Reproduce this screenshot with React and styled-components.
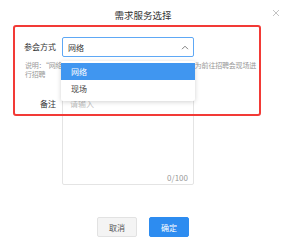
import React from "react";
import styled, { createGlobalStyle } from "styled-components";

const Global = createGlobalStyle`
  html, body { margin: 0; padding: 0; background: #fff; }
  body { font-family: "Noto Sans CJK SC", "Noto Sans", sans-serif; }
  * { box-sizing: border-box; }
`;

const Dialog = styled.div`
  position: relative;
  width: 286px;
  height: 248px;
  background: #fff;
  display: flex;
  flex-direction: column;
`;

const Header = styled.div`
  height: 30px;
  display: flex;
  align-items: center;
  justify-content: center;
  font-size: 9.5px;
  color: #333;
`;

const Close = styled.button`
  position: absolute;
  top: 8px;
  right: 6px;
  width: 9px;
  height: 9px;
  padding: 0;
  border: 0;
  background: none;
  display: flex;
  align-items: center;
  justify-content: center;
`;

const Form = styled.div`
  padding-top: 7px;
  display: flex;
  flex-direction: column;
`;

const Field = styled.div`
  display: flex;
  align-items: ${(p) => (p.$top ? "flex-start" : "center")};
  margin-top: ${(p) => p.$gap || 0}px;
`;

const Label = styled.div`
  width: 62px;
  padding-right: 6px;
  text-align: right;
  font-size: 8px;
  line-height: 10px;
  color: #333;
  padding-top: ${(p) => p.$pt || 0}px;
`;

const SelectWrap = styled.div`
  position: relative;
  width: 132px;
`;

const SelectBox = styled.div`
  height: 20px;
  border: 1px solid #5ea8f5;
  border-radius: 2px;
  display: flex;
  align-items: center;
  justify-content: space-between;
  padding: 0 4px 0 5px;
  font-size: 8px;
  color: #333;
`;

const Menu = styled.div`
  position: absolute;
  top: 24px;
  left: -1px;
  width: 134px;
  padding: 2px 0 4px;
  background: #fff;
  border-radius: 2px;
  box-shadow: 0 1px 5px rgba(0, 0, 0, 0.18);
  z-index: 5;
`;

const Option = styled.div`
  height: 17px;
  line-height: 17px;
  padding-left: 10px;
  font-size: 8px;
  color: ${(p) => (p.$active ? "#fff" : "#444")};
  background: ${(p) => (p.$active ? "#4096f0" : "transparent")};
`;

const Hint = styled.div`
  margin-top: 4px;
  padding-left: 25px;
  width: 270px;
  font-size: 7px;
  line-height: 9px;
  letter-spacing: -0.2px;
  color: #999;
`;

const TextArea = styled.div`
  position: relative;
  width: 132px;
  height: 92px;
  border: 1px solid #e4e4e4;
  border-radius: 2px;
  padding: 5px 7px;
  font-size: 8px;
  line-height: 10px;
  color: #c0c0c0;
`;

const Counter = styled.span`
  position: absolute;
  right: 5px;
  bottom: 1px;
  font-size: 8px;
  color: #999;
`;

const Footer = styled.div`
  margin-top: 32px;
  display: flex;
  justify-content: center;
  gap: 12px;
`;

const Button = styled.button`
  width: 40px;
  height: 20px;
  padding: 0;
  border-radius: 2px;
  font-family: inherit;
  font-size: 8px;
  border: 1px solid ${(p) => (p.$primary ? "#2d8cf0" : "#e2e2e2")};
  background: ${(p) => (p.$primary ? "#2d8cf0" : "#f4f4f4")};
  color: ${(p) => (p.$primary ? "#fff" : "#555")};
`;

const Highlight = styled.div`
  position: absolute;
  left: 13px;
  top: 25px;
  width: 248px;
  height: 91px;
  border: 2px solid #f23a36;
  border-radius: 3px;
  pointer-events: none;
  z-index: 6;
`;

export default function App() {
  return (
    <>
      <Global />
      <Dialog>
        <Header>需求服务选择</Header>
        <Close aria-label="关闭">
          <svg width="8" height="8" viewBox="0 0 8 8">
            <path d="M1 1L7 7M7 1L1 7" stroke="#bdbdbd" strokeWidth="0.9" fill="none" />
          </svg>
        </Close>
        <Form>
          <Field>
            <Label>参会方式</Label>
            <SelectWrap>
              <SelectBox>
                <span>网络</span>
                <svg width="8" height="5" viewBox="0 0 8 5">
                  <path d="M1 4.2L4 1.2L7 4.2" stroke="#808080" strokeWidth="1" fill="none" />
                </svg>
              </SelectBox>
              <Menu>
                <Option $active>网络</Option>
                <Option>现场</Option>
              </Menu>
            </SelectWrap>
          </Field>
          <Hint>
            说明：“网络”参会即为线上视频面试招聘，“现场”参会为前往招聘会现场进
            <br />
            行招聘
          </Hint>
          <Field $top $gap={14}>
            <Label $pt={6}>备注</Label>
            <TextArea>
              请输入
              <Counter>0/100</Counter>
            </TextArea>
          </Field>
        </Form>
        <Footer>
          <Button>取消</Button>
          <Button $primary>确定</Button>
        </Footer>
        <Highlight />
      </Dialog>
    </>
  );
}
